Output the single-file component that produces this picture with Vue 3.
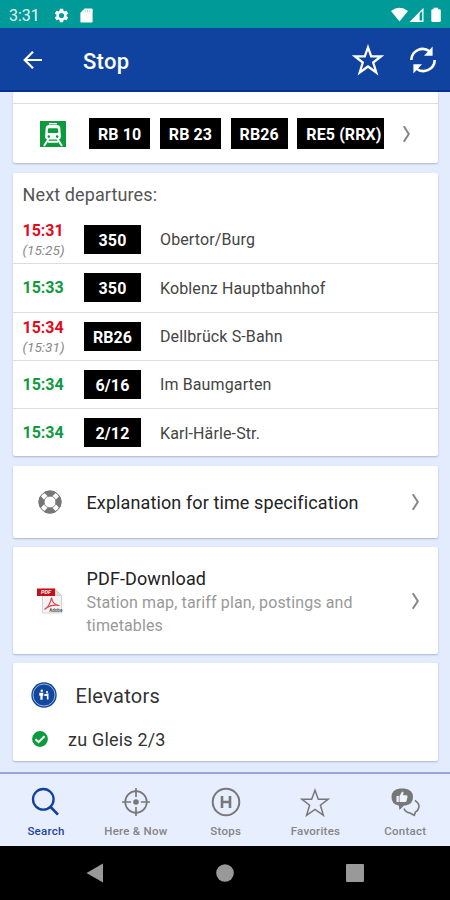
<script setup>
const lines = ['RB 10', 'RB 23', 'RB26', 'RE5 (RRX)']
const departures = [
  { time: '15:31', planned: '(15:25)', line: '350', to: 'Obertor/Burg' },
  { time: '15:33', planned: '', line: '350', to: 'Koblenz Hauptbahnhof' },
  { time: '15:34', planned: '(15:31)', line: 'RB26', to: 'Dellbrück S-Bahn' },
  { time: '15:34', planned: '', line: '6/16', to: 'Im Baumgarten' },
  { time: '15:34', planned: '', line: '2/12', to: 'Karl-Härle-Str.' },
]
</script>

<template>
  <div class="screen">
    <div class="status">
      <span class="clock">3:31</span>
      <svg class="gear" viewBox="0 0 24 24" width="17" height="17"><path fill="#fff" d="M19.14 12.94a7.5 7.5 0 0 0 0-1.88l2.03-1.58a.5.5 0 0 0 .12-.61l-1.92-3.32a.5.5 0 0 0-.59-.22l-2.39.96a7 7 0 0 0-1.62-.94l-.36-2.54a.5.5 0 0 0-.48-.41h-3.84a.5.5 0 0 0-.47.41l-.36 2.54a7.4 7.4 0 0 0-1.62.94l-2.39-.96a.5.5 0 0 0-.59.22L2.74 8.87a.5.5 0 0 0 .12.61l2.03 1.58a7.5 7.5 0 0 0 0 1.88l-2.03 1.58a.5.5 0 0 0-.12.61l1.92 3.32c.12.22.37.29.59.22l2.39-.96c.5.38 1.03.7 1.62.94l.36 2.54c.05.24.24.41.48.41h3.84c.24 0 .44-.17.47-.41l.36-2.54a7.4 7.4 0 0 0 1.62-.94l2.39.96c.22.08.47 0 .59-.22l1.92-3.32a.5.5 0 0 0-.12-.61zM12 15.6a3.6 3.6 0 1 1 0-7.2 3.6 3.6 0 0 1 0 7.2z"/></svg>
      <svg class="sd" viewBox="0 0 13 15" width="13" height="15"><path fill="#fff" d="M4.6.5H11.5Q12.6.5 12.6 1.6V13.3Q12.6 14.5 11.5 14.5H1.5Q.4 14.5.4 13.3V4.8Z"/><path stroke="#8fd2cf" stroke-width=".8" d="M5.3 2v2.3M7.5 2v2.3M9.7 2v2.3"/></svg>
      <svg class="sys" viewBox="0 0 52 16" width="52" height="16">
        <path fill="#fff" d="M0 4Q8.500-2.500 17 4L8.500 14.500Z"/>
        <path fill="#fff" fill-rule="evenodd" d="M32.500.8V15H18.500ZM28.600 6.500V13.600H31.200V4Z"/>
        <path fill="#fff" d="M42.500 2.200V.8h4.600v1.400H48.500q1.300 0 1.300 1.300V13.700q0 1.300-1.300 1.300H41.600q-1.300 0-1.300-1.300V3.500q0-1.300 1.300-1.300Z"/>
      </svg>
    </div>

    <header class="appbar">
      <svg class="back" viewBox="0 0 20 20" width="20" height="20"><path d="M19 10H2M10 1.700 1.700 10 10 18.300" fill="none" stroke="#fff" stroke-width="2.200"/></svg>
      <h1>Stop</h1>
      <svg class="fav" viewBox="0 0 32 32" width="32" height="32"><path d="M16 3.400 19.200 12.400H29L21.200 18.500 24.300 28.500 16 22.500 7.700 28.500 10.800 18.500 3 12.400H12.800Z" fill="none" stroke="#fff" stroke-width="2.300"/></svg>
      <svg class="sync" viewBox="0 0 28 28" width="28" height="28"><g fill="none" stroke="#fff" stroke-width="2.600"><path d="M2.300 14A11.300 11.300 0 0 1 20.500 5.300"/><path d="M25.700 14A11.300 11.300 0 0 1 7.500 22.700"/></g><path fill="#fff" d="M23.600.5V9.700H15ZM4.400 27.500V18.300H13Z"/></svg>
    </header>

    <main class="content">
      <section class="card lines-card">
        <div class="lines-row">
          <svg class="train" viewBox="0 0 26 26" width="26" height="26">
            <rect width="26" height="26" fill="#0b9a3c"/>
            <path d="M9 2.700h8" stroke="#fff" stroke-width="1.500"/>
            <path fill="#fff" fill-rule="evenodd" d="M8.500 4h9q2.500 0 2.800 2.500l.6 9q0 3-2.700 3H7.800q-2.700 0-2.700-3l.6-9Q6 4 8.500 4ZM9 7.200q-.9 0-1 1L7.700 11q0 1 1 1h8.600q1 0 1-1L18 8.200q-.1-1-1-1ZM8.800 14.300a1.300 1.300 0 1 0 0 2.600 1.300 1.300 0 0 0 0-2.600Zm8.400 0a1.300 1.300 0 1 0 0 2.600 1.300 1.300 0 0 0 0-2.600Z"/>
            <path d="M8.500 18 4 25M17.500 18 22 25M8 20.800h10" stroke="#fff" stroke-width="2" fill="none"/>
          </svg>
          <div class="line-list"><span v-for="l in lines" :key="l" class="badge">{{ l }}</span></div>
          <svg class="chev" viewBox="0 0 9 18" width="9" height="18"><path d="M1.800 1.300 6.800 9 1.800 16.700"/></svg>
        </div>
      </section>

      <section class="card departures">
        <h2>Next departures:</h2>
        <div v-for="(d, i) in departures" :key="i" class="dep">
          <div class="times" :class="{ late: d.planned }">
            <b>{{ d.time }}</b>
            <i v-if="d.planned">{{ d.planned }}</i>
          </div>
          <span class="badge fixed">{{ d.line }}</span>
          <span class="dest">{{ d.to }}</span>
        </div>
      </section>

      <section class="card explain">
        <svg class="ring" viewBox="0 0 24 24" width="24" height="24">
          <circle cx="12" cy="12" r="8.600" fill="none" stroke="#777" stroke-width="5.800"/>
          <path d="M3.800 3.800 8.200 8.200M20.200 3.800 15.800 8.200M3.800 20.200 8.200 15.800M20.200 20.200 15.800 15.800" stroke="#fff" stroke-width="4.800"/>
          <circle cx="12" cy="12" r="11" fill="none" stroke="#777" stroke-width="1"/>
          <circle cx="12" cy="12" r="6" fill="none" stroke="#777" stroke-width=".8"/>
        </svg>
        <span class="title">Explanation for time specification</span>
        <svg class="chev" viewBox="0 0 9 18" width="9" height="18"><path d="M1.800 1.300 6.800 9 1.800 16.700"/></svg>
      </section>

      <section class="card pdf">
        <svg class="pdf-icon" viewBox="0 0 28 26" width="28" height="26">
          <path d="M6.500 1H19l6.500 6.500V25h-19Z" fill="#f3f3f3" stroke="#d2d2d2"/>
          <path d="M19 1v6.500h6.500Z" fill="#ddd" stroke="#c4c4c4" stroke-width=".6"/>
          <rect x="1" y=".5" width="18" height="7.500" fill="#c30f16"/>
          <text x="10" y="6.300" text-anchor="middle" class="pdf-tag">PDF</text>
          <path d="M8.500 21.500Q14 18 15.500 9.500 16.500 17 23.500 17.500 15 16 8.500 21.500" fill="none" stroke="#e2434a" stroke-width="1.200"/>
          <text x="19.800" y="23.700" text-anchor="middle" class="adobe">Adobe</text>
        </svg>
        <div class="pdf-text">
          <div class="title">PDF-Download</div>
          <div class="sub">Station map, tariff plan, postings and timetables</div>
        </div>
        <svg class="chev" viewBox="0 0 9 18" width="9" height="18"><path d="M1.800 1.300 6.800 9 1.800 16.700"/></svg>
      </section>

      <section class="card elevators">
        <div class="el-head">
          <svg viewBox="0 0 26 26" width="26" height="26">
            <circle cx="13" cy="13" r="12.700" fill="#11479c"/>
            <circle cx="13" cy="13" r="11" fill="none" stroke="#a9bfe0" stroke-width=".9"/>
            <g fill="#fff"><circle cx="10.800" cy="8.800" r="1.200"/><path d="M8.300 10.800h4v3h-.7v4H9.400v-4H8.300Z"/><circle cx="16" cy="10" r="1.100"/><path d="M13.300 12.300 17.500 11.300V17.600H15.900V14H13.300Z"/></g>
          </svg>
          <h3>Elevators</h3>
        </div>
        <div class="el-row">
          <svg viewBox="0 0 16 16" width="16" height="16"><circle cx="8" cy="8" r="7.900" fill="#0b9a3c"/><path d="M3.500 8.200 6.600 11.200 12.500 5.300" fill="none" stroke="#fff" stroke-width="2"/></svg>
          <span>zu Gleis 2/3</span>
        </div>
      </section>
    </main>

    <nav class="tabs">
      <a class="tab active">
        <svg viewBox="0 0 30 30" width="30" height="30"><g fill="none" stroke="#1140a0" stroke-width="2.300"><circle cx="12.300" cy="12.300" r="10.300"/><path d="M19.400 19.800 27 27.600" stroke-width="2.700"/></g></svg>
        <span>Search</span>
      </a>
      <a class="tab">
        <svg viewBox="0 0 30 30" width="30" height="30"><g fill="none" stroke="#777" stroke-width="1.700"><circle cx="15" cy="15" r="10.800"/><path d="M15 1v9M15 20v9M1 15h9M20 15h9"/></g><circle cx="15" cy="15" r="2.800" fill="#777"/></svg>
        <span>Here &amp; Now</span>
      </a>
      <a class="tab">
        <svg viewBox="0 0 30 30" width="30" height="30"><g fill="none" stroke="#777"><circle cx="15" cy="15" r="13.300" stroke-width="2"/><path d="M11 9v12M19 9v12M11 15h8" stroke-width="2.600"/></g></svg>
        <span>Stops</span>
      </a>
      <a class="tab">
        <svg viewBox="0 0 30 30" width="30" height="30"><path d="M15 3.300 18.300 12.300H28L20.400 18.200 23.400 28.300 15 22.300 6.600 28.300 9.600 18.200 2 12.300H11.700Z" fill="none" stroke="#777" stroke-width="1.500"/></svg>
        <span>Favorites</span>
      </a>
      <a class="tab">
        <svg viewBox="0 0 30 30" width="30" height="30">
          <path fill="#777" d="M9.500 1.500h5Q23 2.500 23 10T15.500 18.500H14L9.500 23 8.800 18.500Q1.500 17.500 1.500 10T9.500 1.500Z"/>
          <path fill="#eef3fd" d="M6.500 9h2.300v6H6.500ZM9.500 9 12.200 4.500q1.800 0 1.300 2L13 8.300h3.500q1.300.3 1 1.800l-1 4q-.3.900-1.300.9H9.500Z"/>
          <path fill="none" stroke="#777" stroke-width="1.600" d="M24.800 13.300Q29.800 16.500 28.800 20.500 28.300 23.500 25.500 25L24.300 28.300 20 26Q15.500 25.500 14 21.500"/>
        </svg>
        <span>Contact</span>
      </a>
    </nav>

    <div class="sysnav">
      <svg viewBox="0 0 18 20" width="18" height="20"><path d="M17 .5V19.500L.5 10Z"/></svg>
      <svg viewBox="0 0 18 18" width="18" height="18"><circle cx="9" cy="9" r="8.800"/></svg>
      <svg viewBox="0 0 18 18" width="18" height="18"><rect width="18" height="18" rx="1"/></svg>
    </div>
  </div>
</template>

<style>
body { background: #e3ecfd; }
</style>

<style scoped>
* { box-sizing: border-box; margin: 0; }
svg { display: block; flex: none; }
.screen { width: 450px; height: 900px; display: flex; flex-direction: column; overflow: hidden; font-family: Roboto, sans-serif; background: #e3ecfd; white-space: nowrap; }
.status { height: 28px; flex: none; background: #009b98; display: flex; align-items: center; padding: 2px 7px 0 9px; }
.clock { color: #e4f5f4; font-size: 16px; width: 44px; }
.sd { margin-left: 10px; }
.sys { margin-left: auto; }
.appbar { height: 64px; flex: none; background: #10439f; border-bottom: 2px solid #052f93; display: flex; align-items: center; padding: 2px 13px 0 23px; color: #fff; }
.appbar h1 { font-size: 22px; font-weight: 500; margin-left: 40px; flex: 1; line-height: 28px; padding-top: 3px; letter-spacing: .3px; }
.fav { margin-right: 25px; }
.content { height: 680px; flex: none; padding: 0 12px 0 13px; display: flex; flex-direction: column; gap: 9px; }
.card { background: #fff; border-radius: 2px; box-shadow: 0 1px 2px #8b9bb8aa; flex: none; }
.lines-card { height: 71px; padding-top: 11px; }
.lines-row { border-top: 1px solid #ddd; height: 60px; display: flex; align-items: center; padding: 0 27px; }
.line-list { display: flex; gap: 9.500px; margin-left: 23px; width: 295.500px; overflow: hidden; }
.badge { background: #000; color: #fff; font-weight: 700; font-size: 16px; line-height: 33px; height: 31px; padding: 0 9px; flex: none; letter-spacing: .1px; }
.line-list .badge:last-child { flex: 1; padding-right: 0; }
.lines-row .chev { margin-left: 18.500px; }
.chev { fill: none; stroke: #858585; stroke-width: 2; }
.departures { height: 283px; margin-top: 1px; }
h2 { font-weight: 400; font-size: 18px; color: #555; letter-spacing: .12px; line-height: 22px; padding: 11px 0 0 9.500px; height: 42px; }
.dep { height: 48.250px; display: flex; align-items: center; padding-left: 9.500px; }
.dep + .dep { border-top: 1px solid #ddd; }
.times { width: 61.500px; display: flex; flex-direction: column; color: #0f9a40; padding-top: 1px; }
.times b { font-size: 16px; line-height: 20px; }
.times i { font-size: 13.600px; line-height: 19px; color: #888; }
.late { color: #e30a1c; }
.late b { padding-top: 1px; }
.badge.fixed { width: 57px; height: 29px; line-height: 31px; padding: 0; text-align: center; }
.dest { margin-left: 19px; font-size: 16px; color: #444; letter-spacing: .12px; padding-top: 1px; }
.explain { height: 72px; margin-top: 1px; display: flex; align-items: center; padding: 0 18px 0 25px; }
.explain .title { margin-left: 24.500px; flex: 1; padding-top: 2px; }
.title { font-size: 18px; color: #222; line-height: 24px; letter-spacing: .11px; }
.pdf { height: 107px; display: flex; align-items: center; padding: 1px 18px 0 23px; }
.pdf-text { flex: 1; margin-left: 22.500px; padding-top: 2px; }
.sub { font-size: 16px; line-height: 23.500px; color: #999; width: 290px; white-space: normal; letter-spacing: .13px; }
.pdf-tag { font-size: 5.500px; font-weight: 700; font-style: italic; fill: #fff; }
.adobe { font-size: 4.500px; font-weight: 700; fill: #555; }
.elevators { height: 98px; padding: 19px 0 0 18px; }
.el-head { display: flex; align-items: center; height: 26px; }
h3 { font-weight: 400; font-size: 20px; color: #333; margin-left: 18.500px; letter-spacing: .3px; padding-top: 1px; }
.el-row { display: flex; align-items: center; height: 24px; margin-top: 19px; padding-left: 1px; color: #333; font-size: 18px; letter-spacing: .2px; }
.el-row span { margin-left: 20px; padding-top: 1px; }
.tabs { height: 74px; flex: none; display: flex; border-top: 2px solid #99a4d7; background: #e7eefe; padding: 13px 0 0 1px; }
.tab { width: 90px; display: flex; flex-direction: column; align-items: center; color: #858585; font-size: 11.500px; font-weight: 500; letter-spacing: .25px; }
.tab span { margin-top: 8px; line-height: 13px; }
.tab:not(:first-child) { margin-right: -.2px; }
.tab.active { color: #2145a5; }
.sysnav { height: 54px; flex: none; background: #000; display: flex; justify-content: space-between; align-items: center; padding: 0 86px; fill: #999; }
</style>
